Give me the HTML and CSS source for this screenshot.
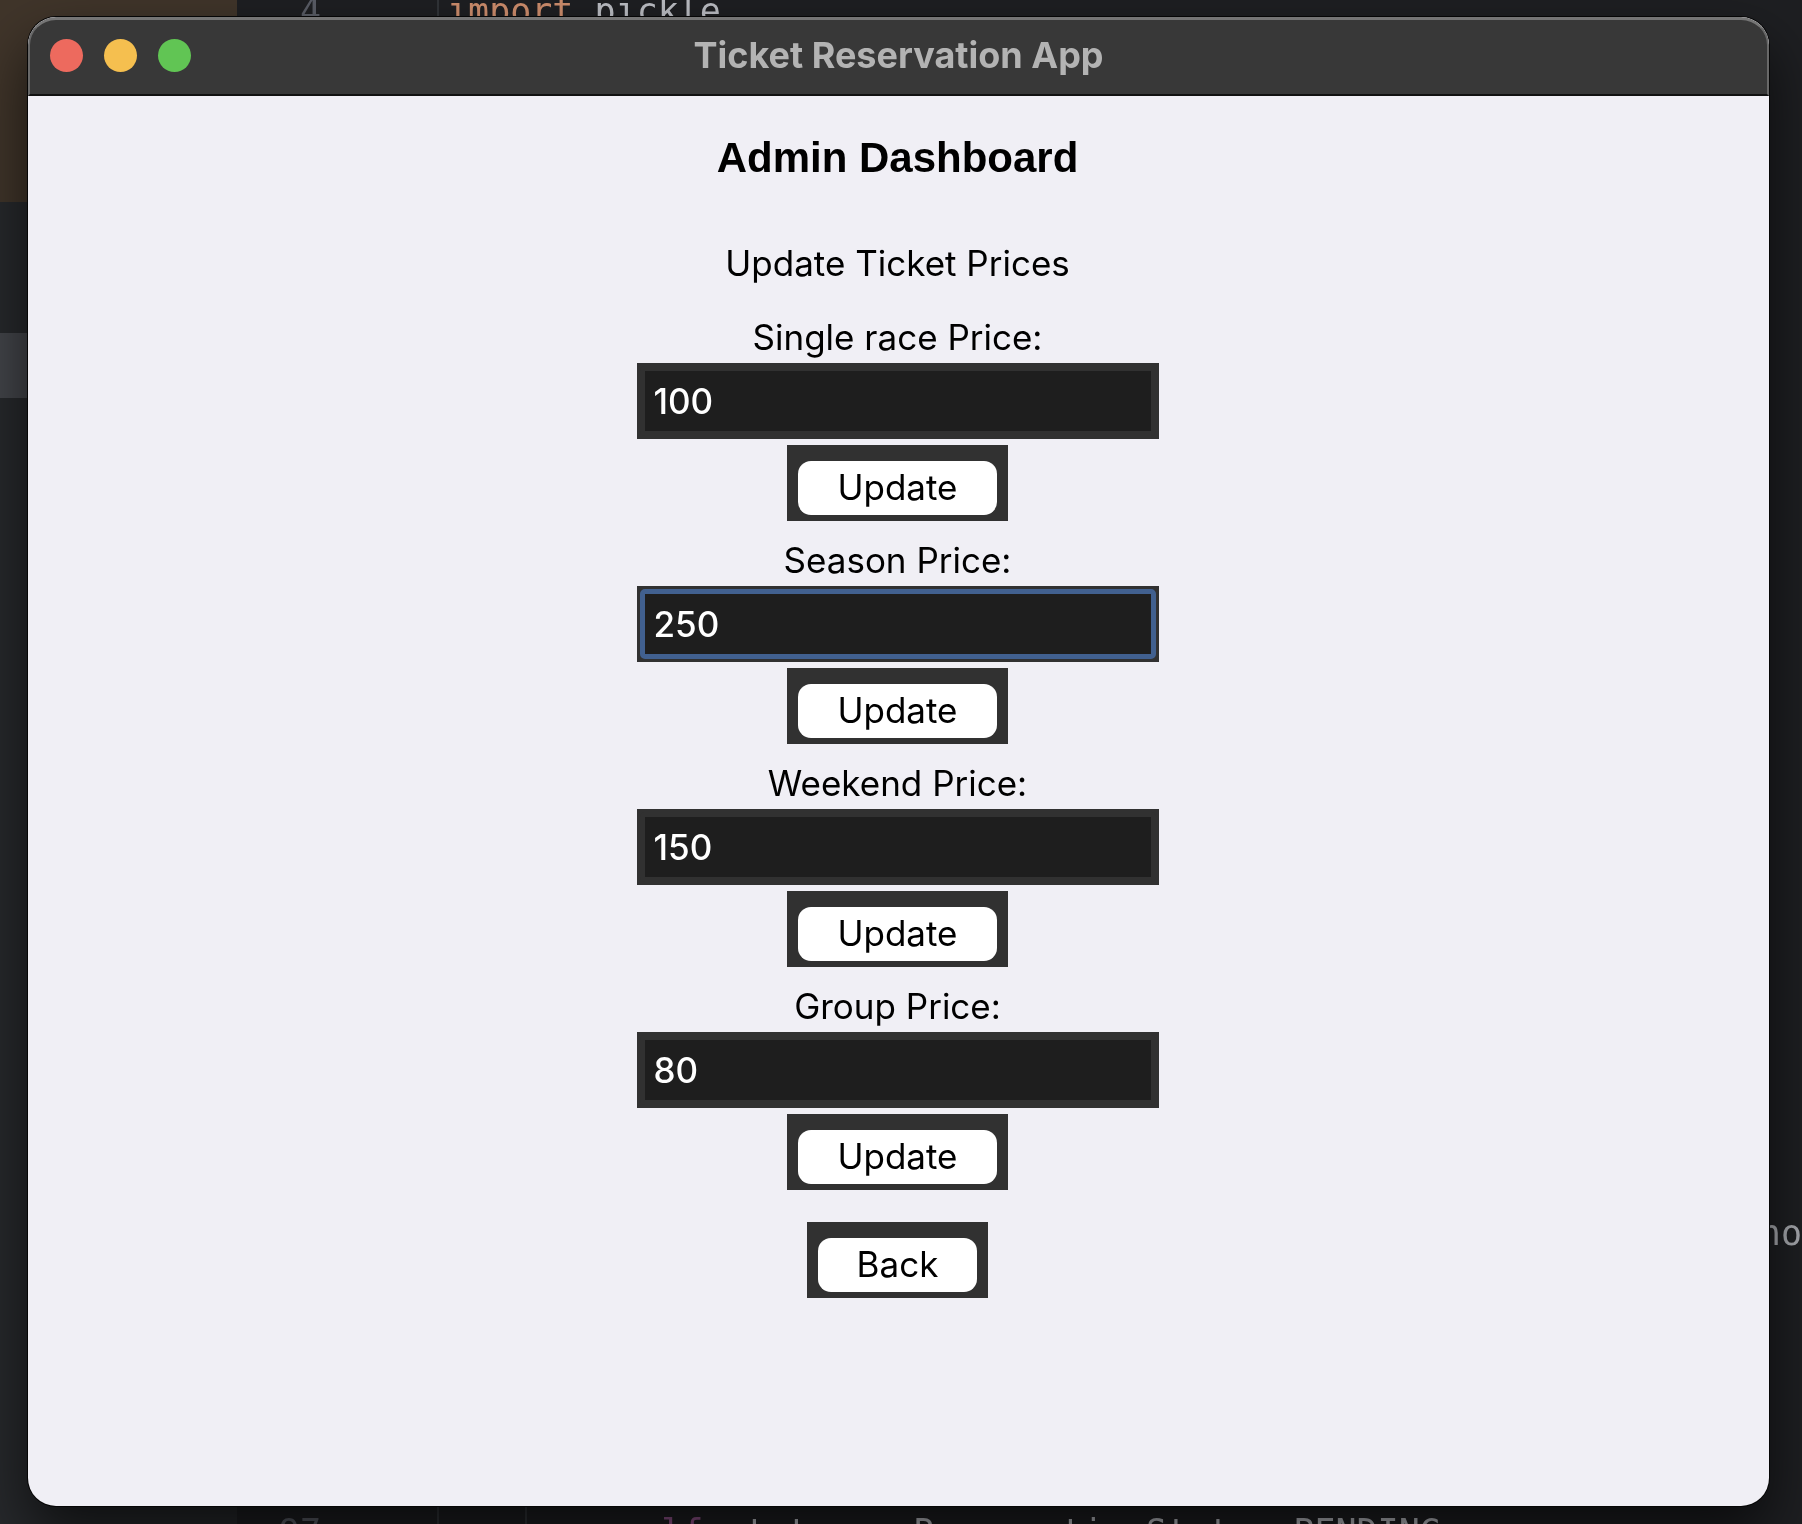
FILE: index.html
```html
<!DOCTYPE html>
<html lang="en">
<head>
<meta charset="utf-8">
<title>Ticket Reservation App</title>
<link rel="stylesheet" href="styles.css">
</head>
<body>
<div class="backdrop" aria-hidden="true">
  <div class="sidebar">
    <div class="sidebar-note"></div>
    <div class="sidebar-row"></div>
  </div>
  <div class="editor">
    <div class="line line-first"><span class="number">4</span><span class="code"><span class="keyword">import</span> pickle</span></div>
    <div class="line line-middle">no</div>
    <div class="line line-last"><span class="number">97</span><span class="code nested"><span class="self">self</span>.status = ReservationStatus.PENDING</span></div>
  </div>
</div>
<main class="window">
  <header class="titlebar">
    <div class="lights">
      <button class="light close" type="button" aria-label="Close"></button>
      <button class="light minimize" type="button" aria-label="Minimize"></button>
      <button class="light maximize" type="button" aria-label="Maximize"></button>
    </div>
    <div class="title">Ticket Reservation App</div>
  </header>
  <form class="content">
    <h1>Admin Dashboard</h1>
    <h2>Update Ticket Prices</h2>
    <div class="fields">
      <div class="field">
        <label for="single">Single race Price:</label>
        <div class="entry"><input id="single" type="text" value="100"></div>
        <div class="action"><button class="push" type="button">Update</button></div>
      </div>
      <div class="field">
        <label for="season">Season Price:</label>
        <div class="entry"><input id="season" class="active" type="text" value="250"></div>
        <div class="action"><button class="push" type="button">Update</button></div>
      </div>
      <div class="field">
        <label for="weekend">Weekend Price:</label>
        <div class="entry"><input id="weekend" type="text" value="150"></div>
        <div class="action"><button class="push" type="button">Update</button></div>
      </div>
      <div class="field">
        <label for="group">Group Price:</label>
        <div class="entry"><input id="group" type="text" value="80"></div>
        <div class="action"><button class="push" type="button">Update</button></div>
      </div>
    </div>
    <div class="action back"><button class="push" type="button">Back</button></div>
  </form>
</main>
</body>
</html>
```

FILE: styles.css
```css
* {
  box-sizing: border-box;
}

body {
  margin: 0;
  min-height: 100vh;
  padding: 17px 33px 18px 28px;
  display: flex;
  background: #1e1f22;
  font-family: Inter, "Liberation Sans", sans-serif;
  font-size: 35px;
  line-height: 40px;
  color: #000;
}

/* Code editor behind the window */
.backdrop {
  position: fixed;
  inset: 0;
  display: flex;
  overflow: hidden;
  z-index: -1;
}

.sidebar {
  width: 237px;
  background: #27292c;
}

.sidebar-note {
  height: 202px;
  background: #40352a;
}

.sidebar-row {
  height: 65px;
  margin-top: 131px;
  background: #43454a;
}

.editor {
  flex: 1;
  display: flex;
  flex-direction: column;
  font-family: "DejaVu Sans Mono", monospace;
  font-size: 35px;
  line-height: 50px;
  color: #bcbec4;
  white-space: pre;
}

.line {
  display: flex;
  height: 50px;
}

.line-first {
  margin-top: -14px;
}

.line-middle {
  justify-content: flex-end;
  margin-top: auto;
  color: #a9abb0;
}

.line-last {
  margin-top: 249px;
  margin-bottom: -33px;
}

.number {
  width: 200px;
  padding-right: 116px;
  display: flex;
  justify-content: flex-end;
  color: #5a5d66;
}

.code {
  flex: 1;
  padding-left: 8px;
  border-left: 2px solid #313438;
}

.nested {
  padding-left: 180px;
  background: linear-gradient(#313438, #313438) 86px 0 / 2px 100% no-repeat;
}

.keyword {
  color: #cf8e6d;
}

.self {
  color: #94558d;
}

/* Application window */
.window {
  flex: 1;
  display: flex;
  flex-direction: column;
  border-radius: 28px;
  background: #f0eff5;
  overflow: hidden;
  box-shadow: 0 0 0 1px #060606, 0 28px 60px rgba(0, 0, 0, 0.65);
}

.titlebar {
  height: 79px;
  padding: 0 20px 4px;
  display: grid;
  grid-template-columns: 1fr auto 1fr;
  align-items: center;
  border: 2px solid #686868;
  border-top: 3px solid #757575;
  border-bottom: 2px solid #111;
  border-radius: 28px 28px 0 0;
  background: #383838;
}

.lights {
  display: flex;
  gap: 21px;
}

.light {
  width: 33px;
  height: 33px;
  padding: 0;
  border: 0;
  border-radius: 50%;
}

.close {
  background: #ed6a5e;
}

.minimize {
  background: #f5bf4f;
}

.maximize {
  background: #61c554;
}

.title {
  font-size: 36px;
  font-weight: 700;
  color: #b3b3b3;
}

.content {
  flex: 1;
  display: flex;
  flex-direction: column;
  align-items: center;
  padding: 38px 22px 36px 20px;
}

h1 {
  margin: 0 0 61px;
  font-family: "Liberation Sans", Arial, sans-serif;
  font-size: 42px;
  line-height: 48px;
}

h2 {
  margin: 0 0 34px;
  font-size: inherit;
  font-weight: 400;
}

.fields {
  display: flex;
  flex-direction: column;
  gap: 19px;
}

.field {
  display: flex;
  flex-direction: column;
  align-items: center;
  gap: 6px;
}

.entry {
  width: 522px;
  max-width: 100%;
  padding: 3px;
  background: #313131;
}

.entry input {
  display: block;
  width: 100%;
  height: 70px;
  padding: 0 9px;
  border: 5px solid #313131;
  border-radius: 5px;
  outline: none;
  background: #1e1e1e;
  color: #fff;
  font: inherit;
  font-weight: 500;
}

.entry input.active,
.entry input:focus {
  border-color: #41608f;
}

.action {
  padding: 16px 11px 6px;
  background: #313131;
}

.push {
  display: block;
  height: 54px;
  padding: 0 39px 2px;
  border: 0;
  border-radius: 13px;
  background: #fff;
  color: #000;
  font: inherit;
}

.back {
  margin-top: 32px;
}
```
